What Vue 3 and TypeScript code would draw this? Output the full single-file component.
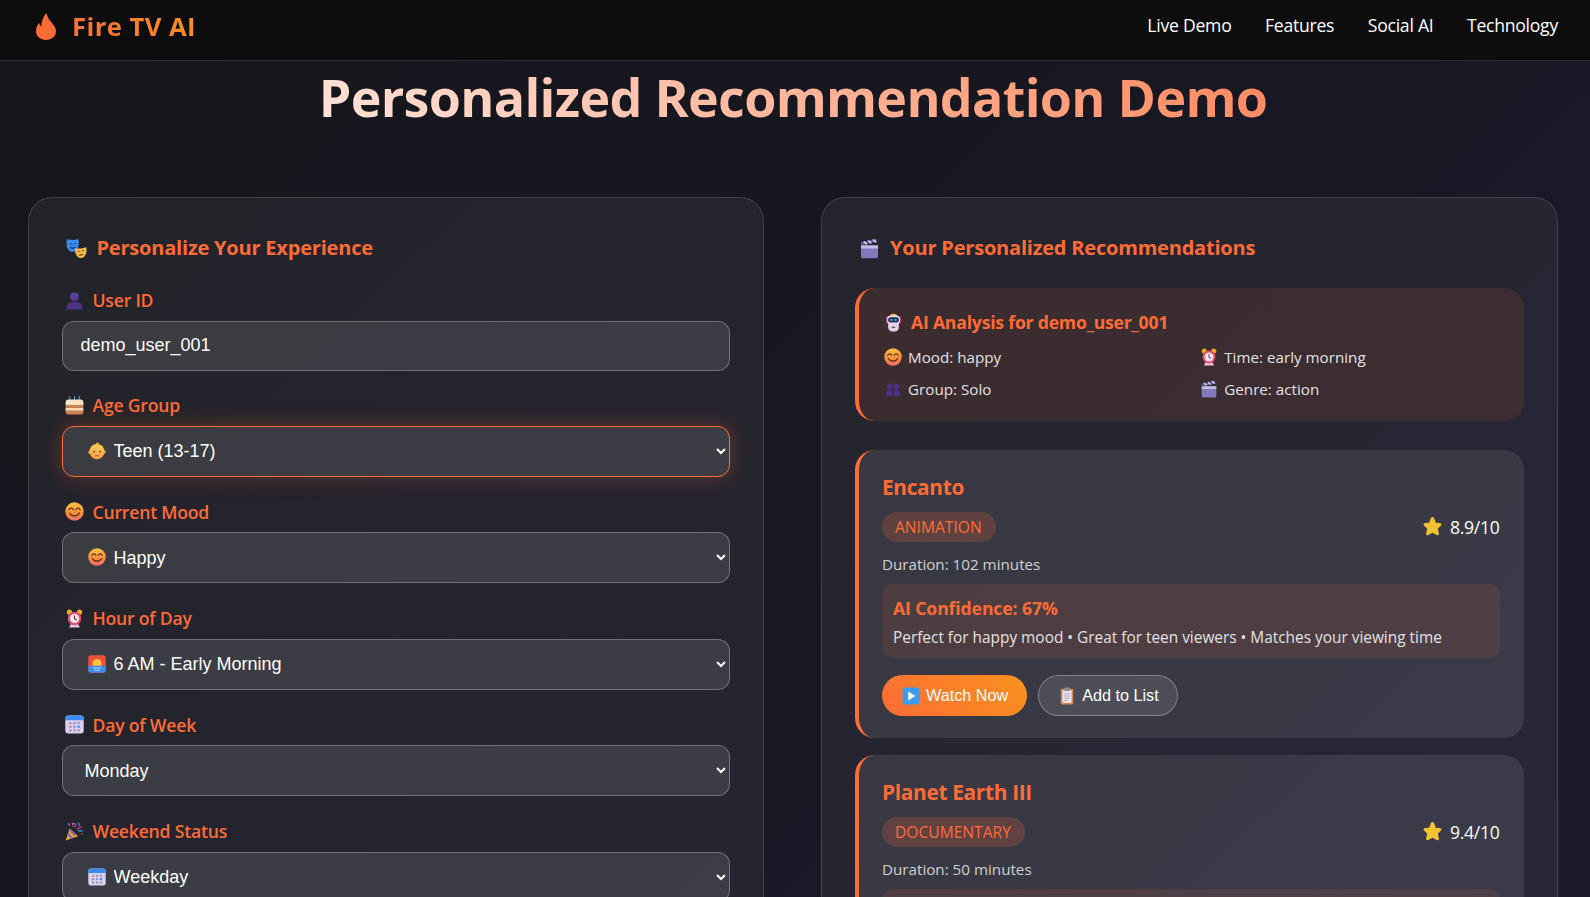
<template>
  <div class="page">
    <!-- top navigation -->
    <nav class="navbar">
      <div class="logo">
        <svg class="flame" viewBox="0 0 20 27"><path d="M10.500 0C11 4 13 6.200 15.600 9.600 18 12.600 20 15 20 18c0 5.400-4.500 9-10 9S0 23.400 0 18c0-3 1.200-5.600 3-8 .5 1.500 1.200 2.600 2.400 3.300C5.400 8 7.500 3.500 10.500 0z" /></svg>
        <span class="logo-text">Fire TV AI</span>
      </div>
      <div class="nav-links">
        <a v-for="link in navLinks" :key="link" href="#">{{ link }}</a>
      </div>
    </nav>

    <h1 class="title">Personalized Recommendation Demo</h1>

    <main class="columns">
      <!-- left column: the form -->
      <section class="panel">
        <h2 class="panel-title form-title">
          <svg class="icon big" viewBox="0 0 32 32" v-html="icons.masks"></svg>
          Personalize Your Experience
        </h2>

        <div class="field first">
          <label><svg class="icon" viewBox="0 0 32 32" v-html="icons.user"></svg>User ID</label>
          <input v-model="userId" type="text" class="control" />
        </div>

        <div v-for="f in fields" :key="f.label" class="field">
          <label><svg class="icon" viewBox="0 0 32 32" v-html="icons[f.icon]"></svg>{{ f.label }}</label>
          <div class="select-wrap">
            <svg v-if="f.optionIcon" class="option-icon" viewBox="0 0 32 32" v-html="icons[f.optionIcon]"></svg>
            <select class="control" :class="{ focused: f.focused, 'with-icon': f.optionIcon }">
              <option>{{ f.value }}</option>
            </select>
          </div>
        </div>
      </section>

      <!-- right column: the results -->
      <section class="panel">
        <h2 class="panel-title">
          <svg class="icon big" viewBox="0 0 32 32" v-html="icons.clapper"></svg>
          Your Personalized Recommendations
        </h2>

        <div class="analysis">
          <h3><svg class="icon" viewBox="0 0 32 32" v-html="icons.robot"></svg>AI Analysis for demo_user_001</h3>
          <div class="analysis-grid">
            <div v-for="a in analysis" :key="a.text" class="analysis-item">
              <svg class="icon small" viewBox="0 0 32 32" v-html="icons[a.icon]"></svg>{{ a.text }}
            </div>
          </div>
        </div>

        <article v-for="m in movies" :key="m.title" class="movie">
          <h3 class="movie-title">{{ m.title }}</h3>
          <div class="movie-meta">
            <span class="tag">{{ m.genre }}</span>
            <span class="rating"><svg class="icon" viewBox="0 0 32 32" v-html="icons.star"></svg>{{ m.rating }}/10</span>
          </div>
          <p class="duration">Duration: {{ m.duration }} minutes</p>
          <div class="confidence">
            <h4>AI Confidence: {{ m.confidence }}%</h4>
            <p>{{ m.reason }}</p>
          </div>
          <div class="actions">
            <button class="btn primary"><svg class="icon btn-icon" viewBox="0 0 32 32" v-html="icons.play"></svg>Watch Now</button>
            <button class="btn secondary"><svg class="icon btn-icon" viewBox="0 0 32 32" v-html="icons.clipboard"></svg>Add to List</button>
          </div>
        </article>
      </section>
    </main>
  </div>
</template>

<script setup lang="ts">
import { ref } from 'vue'

interface Field {
  label: string
  icon: string
  value: string
  optionIcon?: string
  focused?: boolean
}

const navLinks = ['Live Demo', 'Features', 'Social AI', 'Technology']
const userId = ref('demo_user_001')

const fields: Field[] = [
  { label: 'Age Group', icon: 'cake', value: 'Teen (13-17)', optionIcon: 'baby', focused: true },
  { label: 'Current Mood', icon: 'smile', value: 'Happy', optionIcon: 'smile' },
  { label: 'Hour of Day', icon: 'clock', value: '6 AM - Early Morning', optionIcon: 'sunrise' },
  { label: 'Day of Week', icon: 'calendar', value: 'Monday' },
  { label: 'Weekend Status', icon: 'party', value: 'Weekday', optionIcon: 'calendar' }
]

const analysis = [
  { icon: 'smile', text: 'Mood: happy' },
  { icon: 'clock', text: 'Time: early morning' },
  { icon: 'people', text: 'Group: Solo' },
  { icon: 'clapper', text: 'Genre: action' }
]

const movies = [
  {
    title: 'Encanto',
    genre: 'Animation',
    rating: '8.9',
    duration: 102,
    confidence: 67,
    reason: 'Perfect for happy mood • Great for teen viewers • Matches your viewing time'
  },
  {
    title: 'Planet Earth III',
    genre: 'Documentary',
    rating: '9.4',
    duration: 50,
    confidence: 64,
    reason: 'Perfect for happy mood • Great for teen viewers • Matches your viewing time'
  }
]

// small hand drawn emoji, all on a 32x32 box
const icons: Record<string, string> = {
  masks: `<path d="M1 2c6 1.500 12 1.500 18 0 1 6 .5 11-2 15-2 3-5 4.500-7 4C6 21 2 17 1 12z" fill="#3b8cf0"/>
    <path d="M5 10c1-1.500 3-1.500 4 0M11.500 9.500c1-1.500 3-1.500 4-.5" stroke="#123a80" stroke-width="1.500" fill="none"/>
    <path d="M5.500 13c3 2 7 2 10 0-1 4.500-8.500 5.500-10 0z" fill="#123a80"/>
    <path d="M14 15.500c6 1 11 .5 17-1.500 1 6 0 11-3 14-2 2-5 3-8 2-4-2-7-7-6-14.500z" fill="#f5bb4a"/>
    <path d="M17.500 21c1-1 3-1 4 0M24 20c1-1 2.500-1 3.500-.5" stroke="#7a4a10" stroke-width="1.500" fill="none"/>
    <path d="M19.500 27.500c1-3.500 6-4 8-1-2-.5-5.500 0-8 1z" fill="#7a4a10"/>`,
  user: `<circle cx="16" cy="9.500" r="7.500" fill="#5a3f96"/><path d="M2 31c0-9 5-13 14-13s14 4 14 13z" fill="#4b3284"/>`,
  people: `<circle cx="10" cy="11" r="5" fill="#4b3284"/><circle cx="22" cy="11" r="5" fill="#4b3284"/>
    <path d="M3 29c0-7 2-12 7-12s5 5 5 12zM17 29c0-7 0-12 5-12s7 5 7 12z" fill="#4b3284"/>`,
  cake: `<path d="M8 0v7M16 0v7M24 0v7" stroke="#5aa4e8" stroke-width="1.600"/>
    <rect x="1" y="6" width="30" height="12" rx="5" fill="#f9e3c8"/>
    <rect x="1" y="15" width="30" height="5" fill="#c98552"/>
    <rect x="1" y="20" width="30" height="5" fill="#f8d9b5"/>
    <path d="M1 25h30v1c0 3-2 5-4 5H5c-2 0-4-2-4-5z" fill="#c98552"/>`,
  smile: `<defs><linearGradient id="sm" x1="0" y1="0" x2="0" y2="1"><stop offset="0" stop-color="#fdc23e"/><stop offset=".7" stop-color="#f7853c"/><stop offset="1" stop-color="#ee6a7c"/></linearGradient></defs>
    <circle cx="16" cy="16" r="15.500" fill="url(#sm)"/>
    <path d="M6.500 13c1.500-3.500 6-3.500 7.500 0M18 13c1.500-3.500 6-3.500 7.500 0" stroke="#5a2c14" stroke-width="2" fill="none" stroke-linecap="round"/>
    <path d="M8 18.500c3 6.500 13 6.500 16 0" stroke="#5a2c14" stroke-width="2" fill="none" stroke-linecap="round"/>`,
  clock: `<circle cx="7.500" cy="5.500" r="4.500" fill="#e8a92c"/><circle cx="24.500" cy="5.500" r="4.500" fill="#e8a92c"/>
    <path d="M7 31l3-6h12l3 6z" fill="#e8c4e0"/>
    <circle cx="16" cy="16" r="11.500" fill="#e8476a"/><circle cx="16" cy="16" r="8" fill="#f8e8ee"/>
    <path d="M16 11v5.500l3.500 2" stroke="#7a2438" stroke-width="1.800" fill="none"/>`,
  calendar: `<rect x="0.500" y="1" width="31" height="30" rx="5" fill="#dcd0ec"/>
    <path d="M.5 9V6c0-3 2-5 5-5h21c3 0 5 2 5 5v3z" fill="#3b8cf0"/>
    <g fill="#a592c2"><rect x="7" y="12" width="4" height="3.500"/><rect x="14" y="12" width="4" height="3.500"/><rect x="7" y="18" width="4" height="3.500"/><rect x="14" y="18" width="4" height="3.500"/><rect x="7" y="24" width="4" height="3.500"/><rect x="14" y="24" width="4" height="3.500"/><rect x="21" y="24" width="4" height="3.500"/></g>
    <rect x="21" y="12" width="4" height="3.500" fill="#a592c2"/><rect x="21" y="18" width="4" height="3.500" fill="#3b8cf0"/>`,
  party: `<path d="M8 11l14 13L1 31z" fill="#e8a92c"/><path d="M5 18l9 9-3.500 1.500-7-7zM9 13l9 8-2 2.500-8.500-8z" fill="#8a5cc0"/>
    <path d="M12 1l2 7M19 2l-2 7M28 8l-8 4" stroke="#e0388c" stroke-width="2"/>
    <path d="M23 1l1 6M30 15l-8 0M5 2l3 4" stroke="#3b9ce8" stroke-width="2"/>
    <circle cx="15" cy="3" r="1.300" fill="#f5bb4a"/><circle cx="28" cy="20" r="1.300" fill="#e0388c"/>`,
  baby: `<defs><linearGradient id="bb" x1="0" y1="0" x2="0" y2="1"><stop offset="0" stop-color="#fdd25a"/><stop offset="1" stop-color="#f79a3c"/></linearGradient></defs>
    <circle cx="3.500" cy="18" r="3" fill="#f5a53c"/><circle cx="28.500" cy="18" r="3" fill="#f5a53c"/>
    <circle cx="16" cy="17" r="13.500" fill="url(#bb)"/><path d="M16 1c3 0 5 3 3 7-2-1-4-1-6 0 0-3 1-5 3-7z" fill="#f8c038"/>
    <circle cx="11" cy="17" r="1.600" fill="#5a2c14"/><circle cx="21" cy="17" r="1.600" fill="#5a2c14"/>
    <path d="M12.500 23c2 2 5 2 7 0z" fill="#c8384a"/>`,
  sunrise: `<rect x="0.500" y="0.500" width="31" height="31" rx="5" fill="#f0503c"/>
    <circle cx="16" cy="15" r="8" fill="#fcc33c"/>
    <path d="M.5 19h31v7.500c0 3-2 5-5 5h-21c-3 0-5-2-5-5z" fill="#3b8cf0"/>
    <path d="M8 23h16M11 27h10" stroke="#cfe4fb" stroke-width="1.500"/>`,
  clapper: `<path d="M3 13h26v15c0 1.500-1 3-2 3H5c-1 0-2-1.500-2-3z" fill="#8278bc"/>
    <rect x="3" y="11" width="26" height="5" fill="#c2bcea"/>
    <path d="M2.500 6.500L26.500 1l1.300 5L3.800 11.500z" fill="#5f5496"/>
    <path d="M7 5.500l5 4M14 4l5 4M21 2.300l5 4" stroke="#e0dcf5" stroke-width="2.400"/>`,
  robot: `<path d="M4 6v12M28 6v12" stroke="#e0388c" stroke-width="1.400"/>
    <path d="M10 5c0-5 12-5 12 0z" fill="#f5bb4a"/>
    <rect x="5" y="4" width="22" height="15" rx="6" fill="#ecdcf2"/>
    <rect x="7" y="7" width="18" height="9" rx="4" fill="#23314e"/>
    <rect x="10.500" y="10" width="4" height="3" rx="1" fill="#3bb4f0"/><rect x="17.500" y="10" width="4" height="3" rx="1" fill="#3bb4f0"/>
    <path d="M7 18h18v7c0 3-3 6-6 6h-6c-3 0-6-3-6-6z" fill="#e4cfe8"/><rect x="13" y="23" width="6" height="2" rx="1" fill="#333"/>`,
  star: `<path d="M16 0c1.800 0 2.600 1.500 3.300 3.500l2.200 6 6.500.6c3 .3 4 2.400 2.300 4.200l-5.300 5 1.700 8c.5 2.800-1.400 4.200-3.800 2.900L16 26.500l-6.900 3.700c-2.400 1.300-4.300-.1-3.800-2.900l1.700-8-5.300-5C0 12.500 1 10.400 4 10.100l6.500-.6 2.200-6C13.400 1.500 14.200 0 16 0z" fill="#f2c230"/>`,
  play: `<rect x="1" y="1" width="30" height="30" rx="4" fill="#3b9cf0"/><path d="M11 8l13 8-13 8z" fill="#f4f8fc"/>`,
  clipboard: `<rect x="5" y="3" width="22" height="28" rx="2" fill="#d88a50"/>
    <rect x="8" y="6" width="16" height="22" fill="#ece8f4"/>
    <path d="M11 12h10M11 16h10M11 20h10M11 24h7" stroke="#a098c0" stroke-width="1.500"/>
    <rect x="11" y="1" width="10" height="6" rx="1.500" fill="#8a8a98"/>`
}
</script>

<style scoped>
.page {
  font-family: "Open Sans", "Noto Sans", sans-serif;
  line-height: 1.6;
  color: #fff;
  background: linear-gradient(135deg, #15151a 0%, #1b1b2e 100%);
}

.navbar {
  display: flex;
  align-items: center;
  justify-content: space-between;
  box-sizing: border-box;
  height: 61px;
  padding: 0 32px 9px 36px;
  background: #0d0d0e;
  border-bottom: 1px solid #2b2b30;
}

.logo {
  display: flex;
  align-items: center;
  gap: 16px;
}

.flame {
  width: 20px;
  height: 27px;
  margin-top: 2px;
  fill: #ff6b35;
}

.logo-text {
  margin-top: 3px;
  font-size: 25.6px;
  letter-spacing: 0.45px;
  font-weight: 700;
  background: linear-gradient(45deg, #ff6b35, #f7931e);
  -webkit-background-clip: text;
  background-clip: text;
  color: transparent;
}

.nav-links {
  display: flex;
  gap: 33.5px;
}

.nav-links a {
  color: #fff;
  text-decoration: none;
  font-size: 17.6px;
  letter-spacing: -0.25px;
}

.title {
  margin: 0 0 65px;
  padding-right: 4px;
  text-align: center;
  font-size: 52px;
  letter-spacing: -0.7px;
  font-weight: 700;
  line-height: 71px;
  background: linear-gradient(45deg, #fff, #ff6b35);
  -webkit-background-clip: text;
  background-clip: text;
  color: transparent;
}

.columns {
  display: grid;
  grid-template-columns: 1fr 1fr;
  gap: 57px;
  padding: 0 32.5px 0 27.5px;
}

.panel {
  padding: 33px;
  background: rgba(255, 255, 255, 0.06);
  border: 1px solid rgba(255, 255, 255, 0.13);
  border-radius: 24px;
}

.panel-title {
  display: flex;
  align-items: center;
  margin: 0 0 23px;
  font-size: 20px;
  letter-spacing: -0.2px;
  line-height: 34px;
  font-weight: 700;
  color: #ff6b35;
}

.form-title {
  margin-bottom: 21px;
}

.icon {
  flex: none;
  width: 19px;
  height: 19px;
  margin: 0 9px 0 3px;
}

.icon.big {
  width: 21px;
  height: 21px;
  margin: 0 10px 0 4px;
}

.icon.small {
  width: 18px;
  height: 18px;
  margin: 0 6px 0 1px;
}

.field {
  margin-bottom: 21px;
}

.field.first {
  margin-bottom: 20.8px;
}

.field label {
  display: flex;
  align-items: center;
  margin-bottom: 6.4px;
  font-size: 17.6px;
  letter-spacing: -0.2px;
  line-height: 28.2px;
  font-weight: 600;
  color: #ff6b35;
}

.select-wrap {
  position: relative;
}

.option-icon {
  position: absolute;
  left: 26px;
  top: 16px;
  width: 18px;
  height: 18px;
  pointer-events: none;
}

.control {
  display: block;
  box-sizing: border-box;
  width: 100%;
  height: 50px;
  padding: 0 17px 0 18px;
  font-family: "Liberation Sans", Arial, sans-serif;
  font-size: 18px;
  color: #fff;
  background: rgba(255, 255, 255, 0.11);
  border: 1px solid rgba(255, 255, 255, 0.27);
  border-radius: 12px;
  outline: none;
}

select.control {
  height: 50.8px;
}

.control.with-icon {
  padding-left: 47px;
}

.control.focused {
  border-color: #ff6b35;
  box-shadow: 0 0 20px rgba(255, 107, 53, 0.3);
}

.control option {
  color: #fff;
  background: #2a2a35;
}

.analysis {
  padding: 20px 24px;
  margin-bottom: 29px;
  background: rgba(255, 107, 53, 0.1);
  border-left: 4px solid #ff6b35;
  border-radius: 20px;
}

.analysis h3 {
  display: flex;
  align-items: center;
  margin: 0 0 9px;
  font-size: 17.6px;
  letter-spacing: -0.2px;
  line-height: 28px;
  font-weight: 700;
  color: #ff6b35;
}

.analysis h3 .icon {
  margin: 0 8px 0 1px;
}

.analysis-grid {
  display: grid;
  grid-template-columns: 1fr 1fr;
  gap: 8px 16px;
}

.analysis-item {
  display: flex;
  align-items: center;
  font-size: 15.2px;
  line-height: 24px;
  color: #e2e2e2;
}

.movie {
  padding: 21px 24px 22px 23px;
  margin-bottom: 17px;
  background: rgba(255, 255, 255, 0.09);
  border-left: 4px solid #ff6b35;
  border-radius: 20px;
}

.movie-title {
  margin: 0 0 4px;
  font-size: 20.8px;
  letter-spacing: -0.3px;
  line-height: 33px;
  font-weight: 700;
  color: #ff6b35;
}

.movie-meta {
  display: flex;
  align-items: center;
  justify-content: space-between;
  margin-top: 8px;
}

.tag {
  padding: 0 14px 0 13px;
  font-size: 15.6px;
  line-height: 30px;
  text-transform: uppercase;
  color: #ff6b35;
  background: rgba(255, 107, 53, 0.2);
  border-radius: 15px;
}

.rating {
  display: flex;
  align-items: center;
  font-size: 17.6px;
  letter-spacing: -0.3px;
}

.rating .icon {
  margin: 0 8px 0 0;
}

.duration {
  margin: 10px 0 8px;
  font-size: 15.2px;
  line-height: 24px;
  color: #d0d0d0;
}

.confidence {
  padding: 10px 11px 8px;
  background: rgba(255, 107, 53, 0.11);
  border-radius: 10px;
}

.confidence h4 {
  margin: 0 0 4px;
  font-size: 17.6px;
  letter-spacing: -0.1px;
  line-height: 28px;
  font-weight: 700;
  color: #ff6b35;
}

.confidence p {
  margin: 0;
  font-size: 15.4px;
  line-height: 24px;
  color: #e2e2e2;
}

.actions {
  display: flex;
  gap: 11px;
  margin-top: 17px;
}

.btn {
  display: flex;
  align-items: center;
  height: 41px;
  padding: 0 19px 0 20px;
  font-family: "Liberation Sans", Arial, sans-serif;
  font-size: 16.2px;
  color: #fff;
  border-radius: 25px;
  border: none;
}

.btn-icon {
  width: 18px;
  height: 18px;
  margin: 0 6px 0 0;
}

.btn.primary {
  background: linear-gradient(45deg, #ff6b35, #f7931e);
}

.btn.secondary {
  padding: 0 18px 0 19px;
  background: rgba(255, 255, 255, 0.1);
  border: 1px solid rgba(255, 255, 255, 0.3);
}
</style>

<style>
html,
body {
  margin: 0;
  overflow: hidden;
  background: #14141b;
}
</style>
